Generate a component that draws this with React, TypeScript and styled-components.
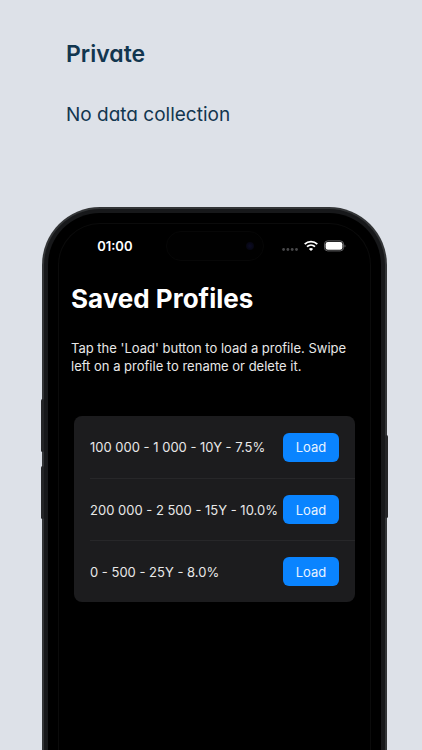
import React from "react";
import styled, { createGlobalStyle } from "styled-components";

const GlobalStyle = createGlobalStyle`
  *, *::before, *::after { box-sizing: border-box; }
  html, body, #root { height: 100%; }
  body {
    margin: 0;
    background: #dde1e8;
    font-family: Inter, "Liberation Sans", sans-serif;
    -webkit-font-smoothing: antialiased;
  }
  h1, h2, p, ul { margin: 0; padding: 0; }
`;

const Page = styled.main`
  display: flex;
  flex-direction: column;
  min-height: 100%;
  background: #dde1e8;
`;

const Intro = styled.header`
  display: flex;
  flex-direction: column;
  gap: 33px;
  padding: 40px 66px 78px;
  color: #12364f;
  font-feature-settings: "cv11";
`;

const IntroTitle = styled.h1`
  font-size: 23px;
  line-height: 28px;
  font-weight: 600;
`;

const IntroText = styled.p`
  font-size: 19px;
  line-height: 28px;
  font-weight: 400;
`;

const Phone = styled.section`
  position: relative;
  flex: 1;
  display: flex;
  margin: 0 35px 0 42px;
  padding: 4px 4px 0;
  border: 2px solid #333537;
  border-bottom: 0;
  border-radius: 58px 58px 0 0;
  background: #17181a;
`;

const SideButton = styled.span<{ $side: "left" | "right"; $top: number; $length: number }>`
  position: absolute;
  ${(p) => p.$side}: -3px;
  top: ${(p) => p.$top}px;
  width: 3px;
  height: ${(p) => p.$length}px;
  border-radius: 2px;
  background: #242527;
`;

const Bezel = styled.div`
  flex: 1;
  display: flex;
  min-width: 0;
  padding: 10px 10px 0;
  border-radius: 52px 52px 0 0;
  background: #000;
`;

const Screen = styled.div`
  flex: 1;
  min-width: 0;
  border: 1px solid #0b0b0b;
  border-bottom: 0;
  border-radius: 42px 42px 0 0;
  color: #fff;
`;

const StatusBar = styled.div`
  display: grid;
  grid-template-columns: 1fr 98px 1fr;
  align-items: center;
  padding: 7px 0 0;
`;

const Time = styled.time`
  justify-self: end;
  margin-right: 33px;
  font-size: 13px;
  line-height: 16px;
  font-weight: 600;
`;

const Island = styled.div`
  display: flex;
  align-items: center;
  justify-content: flex-end;
  height: 30px;
  padding-right: 9px;
  border: 1px solid #070707;
  border-radius: 15px;
  background: #010101;
`;

const Lens = styled.span`
  width: 8px;
  height: 8px;
  border-radius: 50%;
  background: radial-gradient(circle, #0c0c26, #030308);
`;

const StatusIcons = styled.div`
  display: flex;
  align-items: center;
  gap: 6px;
  margin-left: 18px;
`;

const Content = styled.div`
  padding: 20px 12px 24px;
`;

const Title = styled.h2`
  font-size: 26px;
  line-height: 36px;
  font-weight: 700;
`;

const Hint = styled.p`
  margin-top: 22px;
  font-size: 13px;
  line-height: 18px;
  color: #e8e8e8;
`;

const ProfileList = styled.ul`
  margin: 41px 3px 0;
  border-radius: 8px;
  background: #1c1c1e;
  list-style: none;
`;

const ProfileRow = styled.li`
  display: flex;
  align-items: center;
  justify-content: space-between;
  height: 62px;
  margin-left: 16px;
  padding-right: 16px;

  & + & {
    border-top: 1px solid #272729;
  }
`;

const ProfileName = styled.span`
  font-size: 13px;
  line-height: 18px;
  color: #e8e8e8;
  white-space: nowrap;
`;

const LoadButton = styled.button`
  flex: none;
  width: 56px;
  height: 29px;
  padding: 0;
  border: 0;
  border-radius: 6px;
  background: #0a84ff;
  color: #e8f3ff;
  font: 400 13px/18px Inter, "Liberation Sans", sans-serif;
  cursor: pointer;
`;

const profiles = [
  "100 000 - 1 000 - 10Y - 7.5%",
  "200 000 - 2 500 - 15Y - 10.0%",
  "0 - 500 - 25Y - 8.0%",
];

const SignalIcon = () => (
  <svg width="16" height="12" viewBox="0 0 16 12" fill="#48484a" aria-hidden="true">
    <circle cx="1.6" cy="9.5" r="1.4" />
    <circle cx="5.9" cy="9.5" r="1.4" />
    <circle cx="10.2" cy="9.5" r="1.4" />
    <circle cx="14.5" cy="9.5" r="1.4" />
  </svg>
);

const WifiIcon = () => (
  <svg width="14" height="12" viewBox="0 0 14 12" fill="none" stroke="#fff" strokeWidth="1.8" aria-hidden="true">
    <path d="M0.7 4.2C4.3.8 9.7.8 13.3 4.2" />
    <path d="M3 6.7c2.3-2.1 5.7-2.1 8 0" />
    <path d="M4.9 8.9c1.2-1.1 3-1.1 4.2 0L7 11Z" fill="#fff" stroke="none" />
  </svg>
);

const BatteryIcon = () => (
  <svg width="22" height="12" viewBox="0 0 22 12" aria-hidden="true">
    <rect x="0.5" y="0.9" width="19" height="10" rx="3.2" fill="none" stroke="#626264" />
    <rect x="1.6" y="2" width="16.8" height="7.8" rx="2.2" fill="#fff" />
    <path d="M20.5 4.4c1.3.4 1.3 2.6 0 3Z" fill="#626264" />
  </svg>
);

export default function App() {
  return (
    <>
      <GlobalStyle />
      <Page>
        <Intro>
          <IntroTitle>Private</IntroTitle>
          <IntroText>No data collection</IntroText>
        </Intro>
        <Phone aria-label="Saved profiles screen">
          <SideButton $side="left" $top={190} $length={53} />
          <SideButton $side="left" $top={257} $length={53} />
          <SideButton $side="right" $top={226} $length={83} />
          <Bezel>
            <Screen>
              <StatusBar>
                <Time>01:00</Time>
                <Island>
                  <Lens />
                </Island>
                <StatusIcons>
                  <SignalIcon />
                  <WifiIcon />
                  <BatteryIcon />
                </StatusIcons>
              </StatusBar>
              <Content>
                <Title>Saved Profiles</Title>
                <Hint>
                  Tap the 'Load' button to load a profile. Swipe left on a profile to rename or delete it.
                </Hint>
                <ProfileList>
                  {profiles.map((name) => (
                    <ProfileRow key={name}>
                      <ProfileName>{name}</ProfileName>
                      <LoadButton type="button" aria-label={`Load ${name}`}>
                        Load
                      </LoadButton>
                    </ProfileRow>
                  ))}
                </ProfileList>
              </Content>
            </Screen>
          </Bezel>
        </Phone>
      </Page>
    </>
  );
}
